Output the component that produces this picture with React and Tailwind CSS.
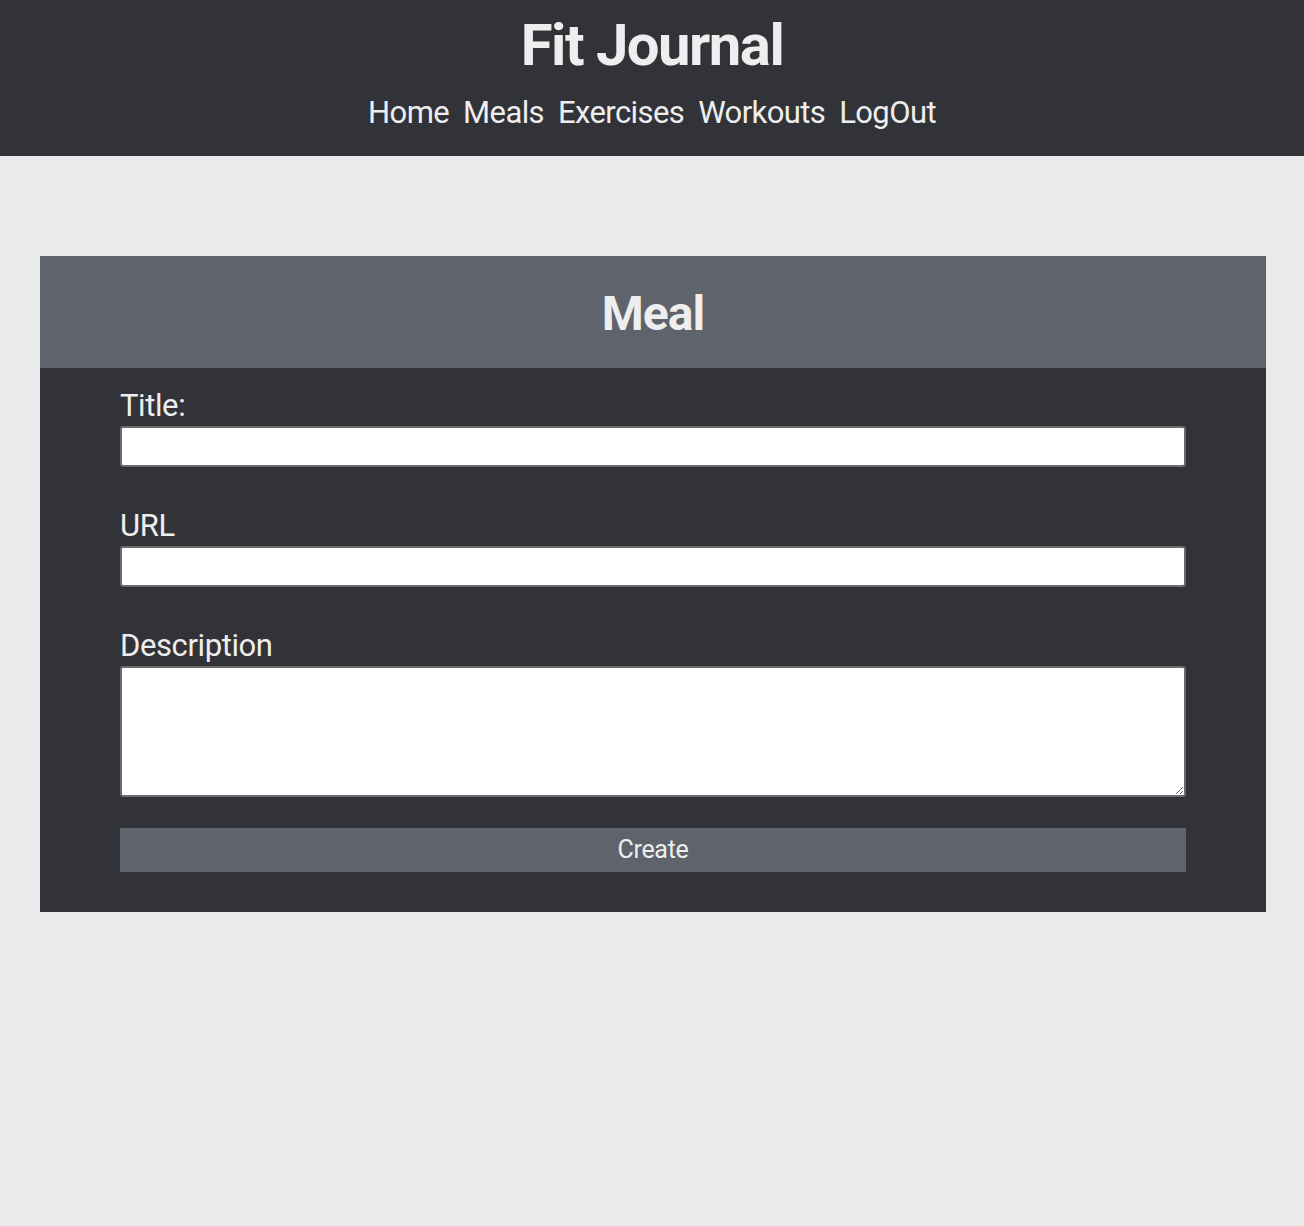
import React, { useState } from "react";

const fontStack = { fontFamily: '"Roboto", "Noto Sans", sans-serif' };

function NavBar() {
  const links = ["Home", "Meals", "Exercises", "Workouts", "LogOut"];
  return (
    <header className="bg-[#323338] h-[156px] flex flex-col items-center text-[#eeeeee]">
      <h1 className="text-[58px] font-bold leading-none mt-[16px] tracking-[-1.5px]">
        Fit Journal
      </h1>
      <nav className="flex gap-[14px] mt-[23px] text-[31px] leading-none tracking-[-0.6px]">
        {links.map((link) => (
          <a key={link} href="#" className="text-[#eeeeee]">
            {link}
          </a>
        ))}
      </nav>
    </header>
  );
}

function MealForm() {
  const [meal, setMeal] = useState({ title: "", url: "", description: "" });

  const handleInputChange = (e) => {
    const { name, value } = e.target;
    setMeal((prev) => ({ ...prev, [name]: value }));
  };

  return (
    <div className="ml-[40px] mr-[38px] mt-[100px] bg-[#323338]">
      {/* Card header */}
      <div className="bg-[#5f636b] h-[112px] flex items-center justify-center">
        <h2 className="text-[48px] font-bold text-[#eeeeee] tracking-[-1px] mt-[4px]">Meal</h2>
      </div>

      {/* Form */}
      <form
        onSubmit={(e) => e.preventDefault()}
        className="px-[80px] pt-[18px] pb-[40px] flex flex-col text-[#eeeeee]"
      >
        <label htmlFor="title" className="text-[31px] leading-[40px] tracking-[-0.4px]">
          Title:
        </label>
        <input
          id="title"
          name="title"
          type="text"
          value={meal.title}
          onChange={handleInputChange}
          className="h-[41px] bg-white border-2 border-[#6a6a6d] rounded-[3px] text-black px-2"
        />

        <label htmlFor="url" className="mt-[39px] text-[31px] leading-[40px] tracking-[-0.4px]">
          URL
        </label>
        <input
          id="url"
          name="url"
          type="text"
          value={meal.url}
          onChange={handleInputChange}
          className="h-[41px] bg-white border-2 border-[#6a6a6d] rounded-[3px] text-black px-2"
        />

        <label
          htmlFor="description"
          className="mt-[39px] text-[31px] leading-[40px] tracking-[-0.4px]"
        >
          Description
        </label>
        <textarea
          id="description"
          name="description"
          value={meal.description}
          onChange={handleInputChange}
          className="h-[131px] bg-white border-2 border-[#6a6a6d] rounded-[3px] text-black px-2 resize"
        />

        <button
          type="submit"
          className="mt-[31px] h-[44px] bg-[#5f636b] text-[#eeeeee] text-[25px] tracking-[-0.3px]"
        >
          Create
        </button>
      </form>
    </div>
  );
}

export default function App() {
  return (
    <div className="min-h-[1226px] bg-[#eaeaea] overflow-hidden" style={fontStack}>
      <NavBar />
      <MealForm />
    </div>
  );
}
